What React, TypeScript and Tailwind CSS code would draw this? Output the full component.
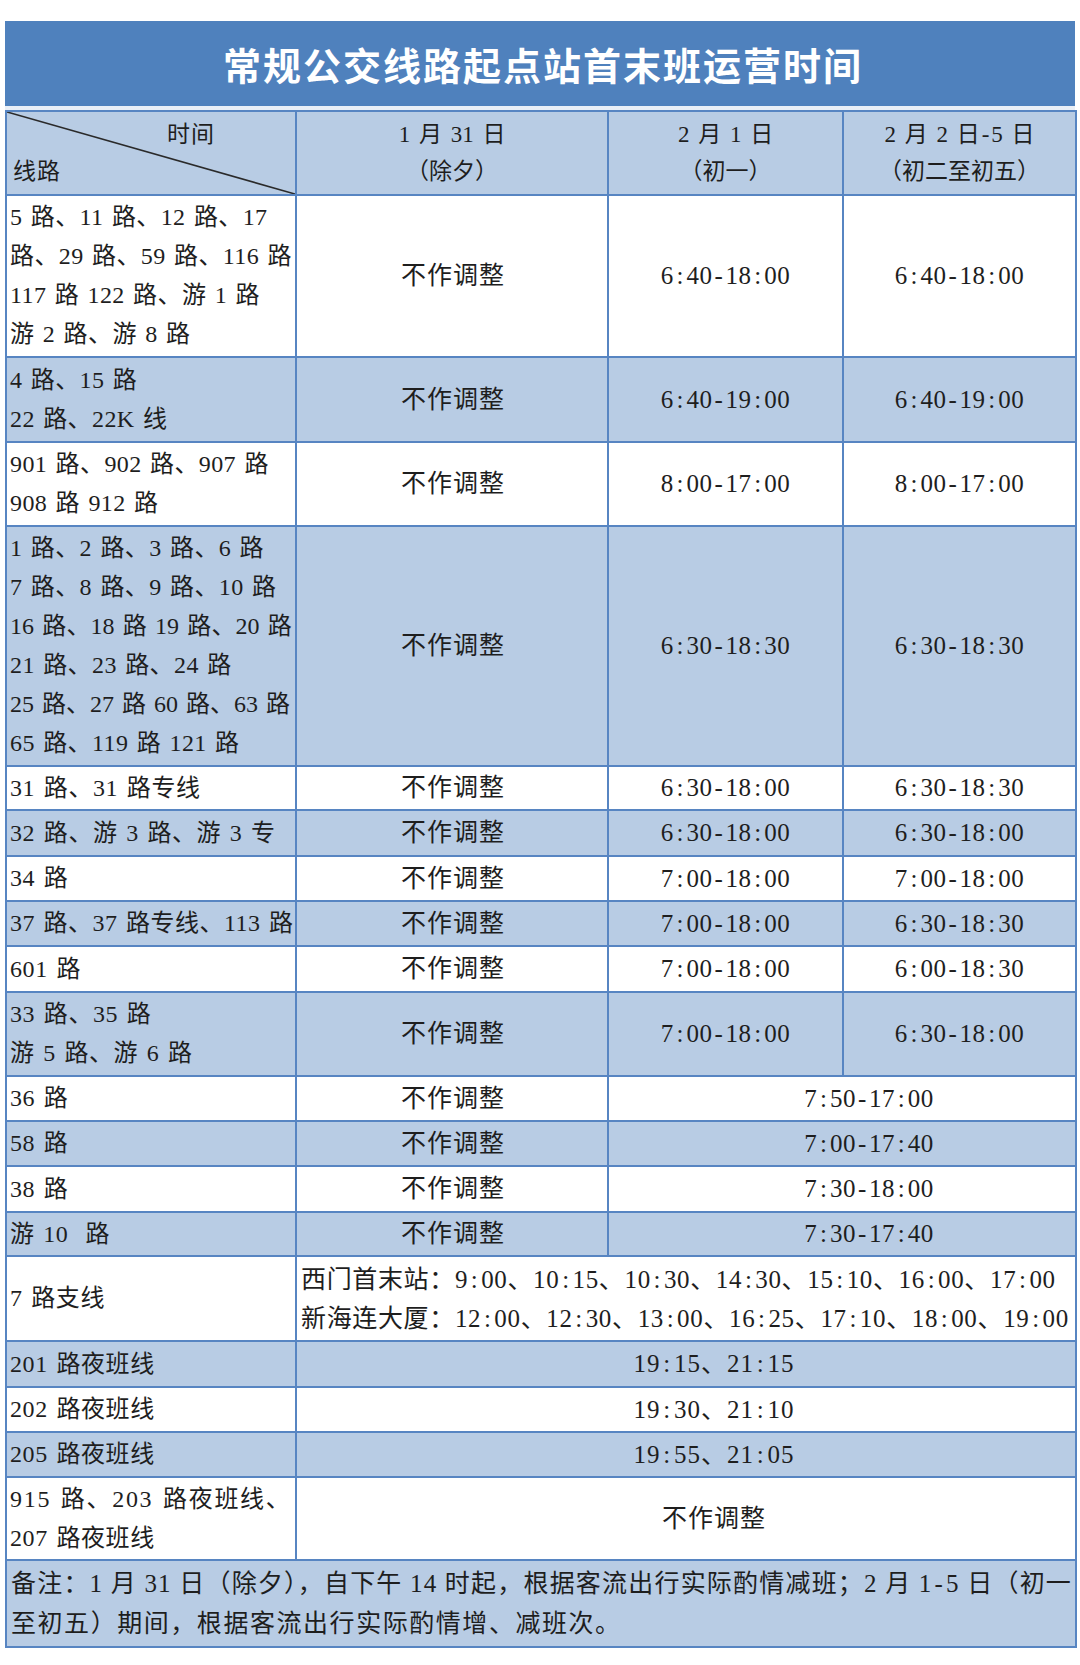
import React from "react";

const BLUE = "bg-[#b8cce4]";
const WHITE = "bg-white";

function fmt(s: string) {
  const parts = s.split(/([:\-])/);
  return parts.map((p, i) =>
    p === ":" ? (
      <span key={i} className="mx-[2.75px]">:</span>
    ) : p === "-" ? (
      <span key={i} className="mx-[2px]">-</span>
    ) : (
      <React.Fragment key={i}>{p}</React.Fragment>
    )
  );
}

type Line = string | [string, string];

type Row = {
  route: Line[];
  tr: string;
  blue: boolean;
  h: string;
  c2?: string;
  c3?: string;
  c4?: string;
  m34?: string;
  m234?: string;
  special?: boolean;
};

const T1 = "tracking-[0.4px]";
const T2 = "tracking-[0.6px]";

const rows: Row[] = [
  { route: ["5 路、11 路、12 路、17", "路、29 路、59 路、116 路", "117 路 122 路、游 1 路", "游 2 路、游 8 路"], tr: T1, blue: false, h: "h-[162px]", c2: "不作调整", c3: "6:40-18:00", c4: "6:40-18:00" },
  { route: ["4 路、15 路", "22 路、22K 线"], tr: T1, blue: true, h: "h-[85px]", c2: "不作调整", c3: "6:40-19:00", c4: "6:40-19:00" },
  { route: ["901 路、902 路、907 路", "908 路 912 路"], tr: T1, blue: false, h: "h-[84px]", c2: "不作调整", c3: "8:00-17:00", c4: "8:00-17:00" },
  { route: ["1 路、2 路、3 路、6 路", "7 路、8 路、9 路、10 路", ["16 路、18 路 19 路、20 路", "tracking-[0.1px]"], "21 路、23 路、24 路", ["25 路、27 路 60 路、63 路", "tracking-[0px]"], "65 路、119 路 121 路"], tr: T1, blue: true, h: "h-[240px]", c2: "不作调整", c3: "6:30-18:30", c4: "6:30-18:30" },
  { route: ["31 路、31 路专线"], tr: T2, blue: false, h: "h-[44px]", c2: "不作调整", c3: "6:30-18:00", c4: "6:30-18:30" },
  { route: ["32 路、游 3 路、游 3 专"], tr: T2, blue: true, h: "h-[46px]", c2: "不作调整", c3: "6:30-18:00", c4: "6:30-18:00" },
  { route: ["34 路"], tr: T2, blue: false, h: "h-[45px]", c2: "不作调整", c3: "7:00-18:00", c4: "7:00-18:00" },
  { route: ["37 路、37 路专线、113 路"], tr: "tracking-[0.5px]", blue: true, h: "h-[45px]", c2: "不作调整", c3: "7:00-18:00", c4: "6:30-18:30" },
  { route: ["601 路"], tr: T2, blue: false, h: "h-[46px]", c2: "不作调整", c3: "7:00-18:00", c4: "6:00-18:30" },
  { route: ["33 路、35 路", "游 5 路、游 6 路"], tr: T2, blue: true, h: "h-[84px]", c2: "不作调整", c3: "7:00-18:00", c4: "6:30-18:00" },
  { route: ["36 路"], tr: T2, blue: false, h: "h-[45px]", c2: "不作调整", m34: "7:50-17:00" },
  { route: ["58 路"], tr: T2, blue: true, h: "h-[45px]", c2: "不作调整", m34: "7:00-17:40" },
  { route: ["38 路"], tr: T2, blue: false, h: "h-[46px]", c2: "不作调整", m34: "7:30-18:00" },
  { route: ["游 10  路"], tr: T2, blue: true, h: "h-[44px]", c2: "不作调整", m34: "7:30-17:40" },
  { route: ["7 路支线"], tr: T2, blue: false, h: "h-[85px]", special: true },
  { route: ["201 路夜班线"], tr: T2, blue: true, h: "h-[46px]", m234: "19:15、21:15" },
  { route: ["202 路夜班线"], tr: T2, blue: false, h: "h-[45px]", m234: "19:30、21:10" },
  { route: ["205 路夜班线"], tr: T2, blue: true, h: "h-[45px]", m234: "19:55、21:05" },
  { route: [["915 路、203 路夜班线、", "tracking-[1.7px]"], "207 路夜班线"], tr: T2, blue: false, h: "h-[83px]", m234: "不作调整" },
];

const cell = "border-2 border-[#5785c2] p-0 align-middle";

export default function App() {
  return (
    <div
      className="w-[1080px] h-[1665px] bg-white pt-[21px] text-[#1e1e1e]"
      style={{ fontFamily: '"Liberation Serif", "Noto Sans CJK SC", serif' }}
    >
      <div className="ml-[5px] w-[1070px]">
        <div className="h-[85px] bg-[#4f81bd] flex items-center justify-center pl-[6px]">
          <h1
            className="text-white text-[38px] font-bold tracking-[2px] leading-none"
            style={{ fontFamily: '"Noto Sans CJK SC", sans-serif' }}
          >
            常规公交线路起点站首末班运营时间
          </h1>
        </div>
        <div className="h-[4px] bg-[#e9eff7]" />
        <table className="table-fixed border-collapse w-[1070px]">
          <colgroup>
            <col className="w-[290px]" />
            <col className="w-[312px]" />
            <col className="w-[235px]" />
            <col className="w-[233px]" />
          </colgroup>
          <thead>
            <tr className="h-[84px]">
              <th className={`${cell} ${BLUE} relative font-normal text-[23px] leading-[37px]`}>
                <svg
                  className="absolute inset-0 w-full h-full"
                  viewBox="0 0 100 100"
                  preserveAspectRatio="none"
                >
                  <line x1="0" y1="0" x2="100" y2="100" stroke="#2a2a2a" strokeWidth="1.6" vectorEffect="non-scaling-stroke" />
                </svg>
                <div className="flex flex-col text-left tracking-[1px]">
                  <div className="pl-[160px]">时间</div>
                  <div className="pl-[6px]">线路</div>
                </div>
              </th>
              <th className={`${cell} ${BLUE} font-normal text-[23px] leading-[37px] [word-spacing:3px]`}>
                <div>1 月 31 日</div>
                <div>（除夕）</div>
              </th>
              <th className={`${cell} ${BLUE} font-normal text-[23px] leading-[37px] [word-spacing:3px]`}>
                <div>2 月 1 日</div>
                <div>（初一）</div>
              </th>
              <th className={`${cell} ${BLUE} font-normal text-[23px] leading-[37px] [word-spacing:3px]`}>
                <div>2 月 2 日{fmt("-")}5 日</div>
                <div>（初二至初五）</div>
              </th>
            </tr>
          </thead>
          <tbody>
            {rows.map((r, i) => {
              const bg = r.blue ? BLUE : WHITE;
              return (
                <tr key={i} className={r.h}>
                  <td className={`${cell} ${bg} pl-[3px] text-[24px] leading-[39px] [word-spacing:2px] whitespace-pre`}>
                    {r.route.map((l, j) =>
                      typeof l === "string" ? (
                        <div key={j} className={r.tr}>{l}</div>
                      ) : (
                        <div key={j} className={l[1]}>{l[0]}</div>
                      )
                    )}
                  </td>
                  {r.special ? (
                    <td colSpan={3} className={`${cell} ${bg} pl-[4px] text-[25px] leading-[39px] tracking-[0.65px] whitespace-nowrap`}>
                      <div>西门首末站：{fmt("9:00、10:15、10:30、14:30、15:10、16:00、17:00")}</div>
                      <div>新海连大厦：{fmt("12:00、12:30、13:00、16:25、17:10、18:00、19:00")}</div>
                    </td>
                  ) : r.m234 ? (
                    <td colSpan={3} className={`${cell} ${bg} pl-[56px] text-center text-[25px] tracking-[1px]`}>
                      {fmt(r.m234)}
                    </td>
                  ) : (
                    <>
                      <td className={`${cell} ${bg} pl-[2px] text-center text-[25px] tracking-[1px]`}>
                        {r.c2}
                      </td>
                      {r.m34 ? (
                        <td colSpan={2} className={`${cell} ${bg} pl-[54px] text-center text-[25px] tracking-[0.5px]`}>
                          {fmt(r.m34)}
                        </td>
                      ) : (
                        <>
                          <td className={`${cell} ${bg} text-center text-[25px] tracking-[0.5px]`}>
                            {fmt(r.c3 || "")}
                          </td>
                          <td className={`${cell} ${bg} text-center text-[25px] tracking-[0.5px]`}>
                            {fmt(r.c4 || "")}
                          </td>
                        </>
                      )}
                    </>
                  )}
                </tr>
              );
            })}
            <tr className="h-[87px]">
              <td colSpan={4} className={`${cell} ${BLUE} pl-[4px] text-[25px] leading-[40px] whitespace-nowrap`}>
                <div className="tracking-[1.2px]">备注：1 月 31 日（除夕），自下午 14 时起，根据客流出行实际酌情减班；2 月 1{fmt("-")}5 日（初一</div>
                <div className="tracking-[1.55px]">至初五）期间，根据客流出行实际酌情增、减班次。</div>
              </td>
            </tr>
          </tbody>
        </table>
      </div>
    </div>
  );
}
